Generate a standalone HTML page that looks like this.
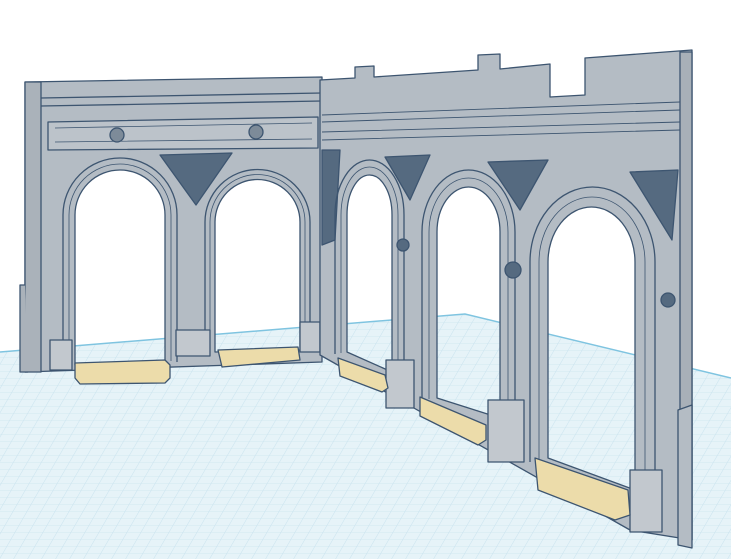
<!DOCTYPE html>
<html><head><style>html,body{margin:0;padding:0;background:#fff;overflow:hidden}svg{display:block}</style></head>
<body>
<svg width="731" height="559" viewBox="0 0 731 559" xmlns="http://www.w3.org/2000/svg">
<defs>
<pattern id="g" width="14" height="14" patternUnits="userSpaceOnUse" patternTransform="skewX(-30) scale(1,0.5)">
<path d="M0 0H14M0 0V14" stroke="#c9e3ee" stroke-width="1.2" fill="none"/>
</pattern>
</defs>
<polygon points="0,352 465,314 731,378 731,559 0,559" fill="#e6f3f8"/>
<polygon points="0,352 465,314 731,378 731,559 0,559" fill="url(#g)"/>
<polyline points="0,352 465,314 731,378" fill="none" stroke="#7fc4e0" stroke-width="1.5"/>

<g stroke="#3d5570" stroke-width="1.3" stroke-linejoin="round">
<!-- left wall -->
<path fill-rule="evenodd" fill="#b4bcc4" d="M25,82 L322,77 L322,362 L25,372 Z
M75,365 V215 A45,45 0 0 1 165,215 V360 Z
M215,352 V222 A42.5,42.5 0 0 1 300,222 V350 Z"/>
<rect x="25" y="82" width="16" height="290" fill="#aab2ba"/>
<path d="M41,98 L322,93 M41,106 L322,101" fill="none"/>
<path d="M48,122 L318,117 L318,148 L48,150 Z" fill="#bcc3ca"/>
<path d="M55,128 L312,123 M55,142 L312,139" fill="none" stroke-width="0.8"/>
<circle cx="117" cy="135" r="7" fill="#7d8b99"/><circle cx="256" cy="132" r="7" fill="#7d8b99"/>
<path d="M160,155 L232,153 L196,205 Z" fill="#556a80"/>
<path d="M63,368 V215 A57,57 0 0 1 177,215 V362" fill="none"/>
<path d="M69,366 V215 A51,51 0 0 1 171,215 V361" fill="none" stroke-width="0.8"/>
<path d="M205,354 V222 A52.5,52.5 0 0 1 310,222 V350" fill="none"/>
<path d="M210,353 V222 A47.5,47.5 0 0 1 305,222 V350" fill="none" stroke-width="0.8"/>
<rect x="176" y="330" width="34" height="26" fill="#c2c8ce"/>
<rect x="300" y="322" width="20" height="30" fill="#c2c8ce"/>
<rect x="50" y="340" width="22" height="30" fill="#c2c8ce"/>
<path d="M25,285 L20,285 L20,372 L28,372" fill="#aab2ba"/>
<path d="M75,363 L165,360 L170,365 L170,378 L165,383 L80,384 L75,378 Z" fill="#ecdcaa"/>
<path d="M218,350 L298,347 L300,360 L222,367 Z" fill="#ecdcaa"/>

<!-- right wall -->
<path fill-rule="evenodd" fill="#b4bcc4" d="M320,80 L355,78 L355,67 L374,66 L374,77 L478,70 L478,55 L500,54 L500,69 L550,64 L550,97 L585,95 L585,58 L692,50 L692,540 L630,530 L320,355 Z
M347,352 V215 A22.5,40 0 0 1 392,215 V372 Z
M437,398 V232 A31.5,45 0 0 1 500,232 V418 Z
M548,458 V262 A43.5,55 0 0 1 635,262 V490 Z"/>
<path d="M322,115 L680,102 M322,122 L680,110 M322,132 L680,122 M322,140 L680,130" fill="none" stroke-width="0.9"/>
<path d="M385,157 L430,155 L410,200 Z" fill="#556a80"/>
<path d="M488,162 L548,160 L520,210 Z" fill="#556a80"/>
<path d="M630,172 L678,170 L672,240 Z" fill="#556a80"/>
<path d="M322,150 L340,150 L335,240 L322,245 Z" fill="#556a80"/>
<path d="M335,354 V215 A34.5,55 0 0 1 404,215 V380" fill="none"/>
<path d="M341,353 V215 A28.5,48 0 0 1 398,215 V376" fill="none" stroke-width="0.8"/>
<path d="M422,400 V232 A46.5,62 0 0 1 515,232 V428" fill="none"/>
<path d="M429,399 V232 A39.5,54 0 0 1 508,232 V423" fill="none" stroke-width="0.8"/>
<path d="M530,462 V262 A62.5,75 0 0 1 655,262 V500" fill="none"/>
<path d="M539,460 V262 A53,65 0 0 1 645,262 V495" fill="none" stroke-width="0.8"/>
<rect x="386" y="360" width="28" height="48" fill="#c2c8ce"/>
<rect x="488" y="400" width="36" height="62" fill="#c2c8ce"/>
<rect x="630" y="470" width="32" height="62" fill="#c2c8ce"/>
<rect x="680" y="52" width="12" height="488" fill="#a8b0b8"/>
<path d="M678,410 L692,405 L692,548 L678,545 Z" fill="#b4bcc4"/>
<circle cx="403" cy="245" r="6" fill="#556a80"/><circle cx="513" cy="270" r="8" fill="#556a80"/><circle cx="668" cy="300" r="7" fill="#556a80"/>
<path d="M338,358 L385,375 L388,388 L382,392 L340,376 Z" fill="#ecdcaa"/>
<path d="M420,397 L486,425 L486,440 L478,445 L420,416 Z" fill="#ecdcaa"/>
<path d="M535,458 L628,490 L630,515 L615,520 L538,490 Z" fill="#ecdcaa"/>
</g>
</svg>
</body></html>
